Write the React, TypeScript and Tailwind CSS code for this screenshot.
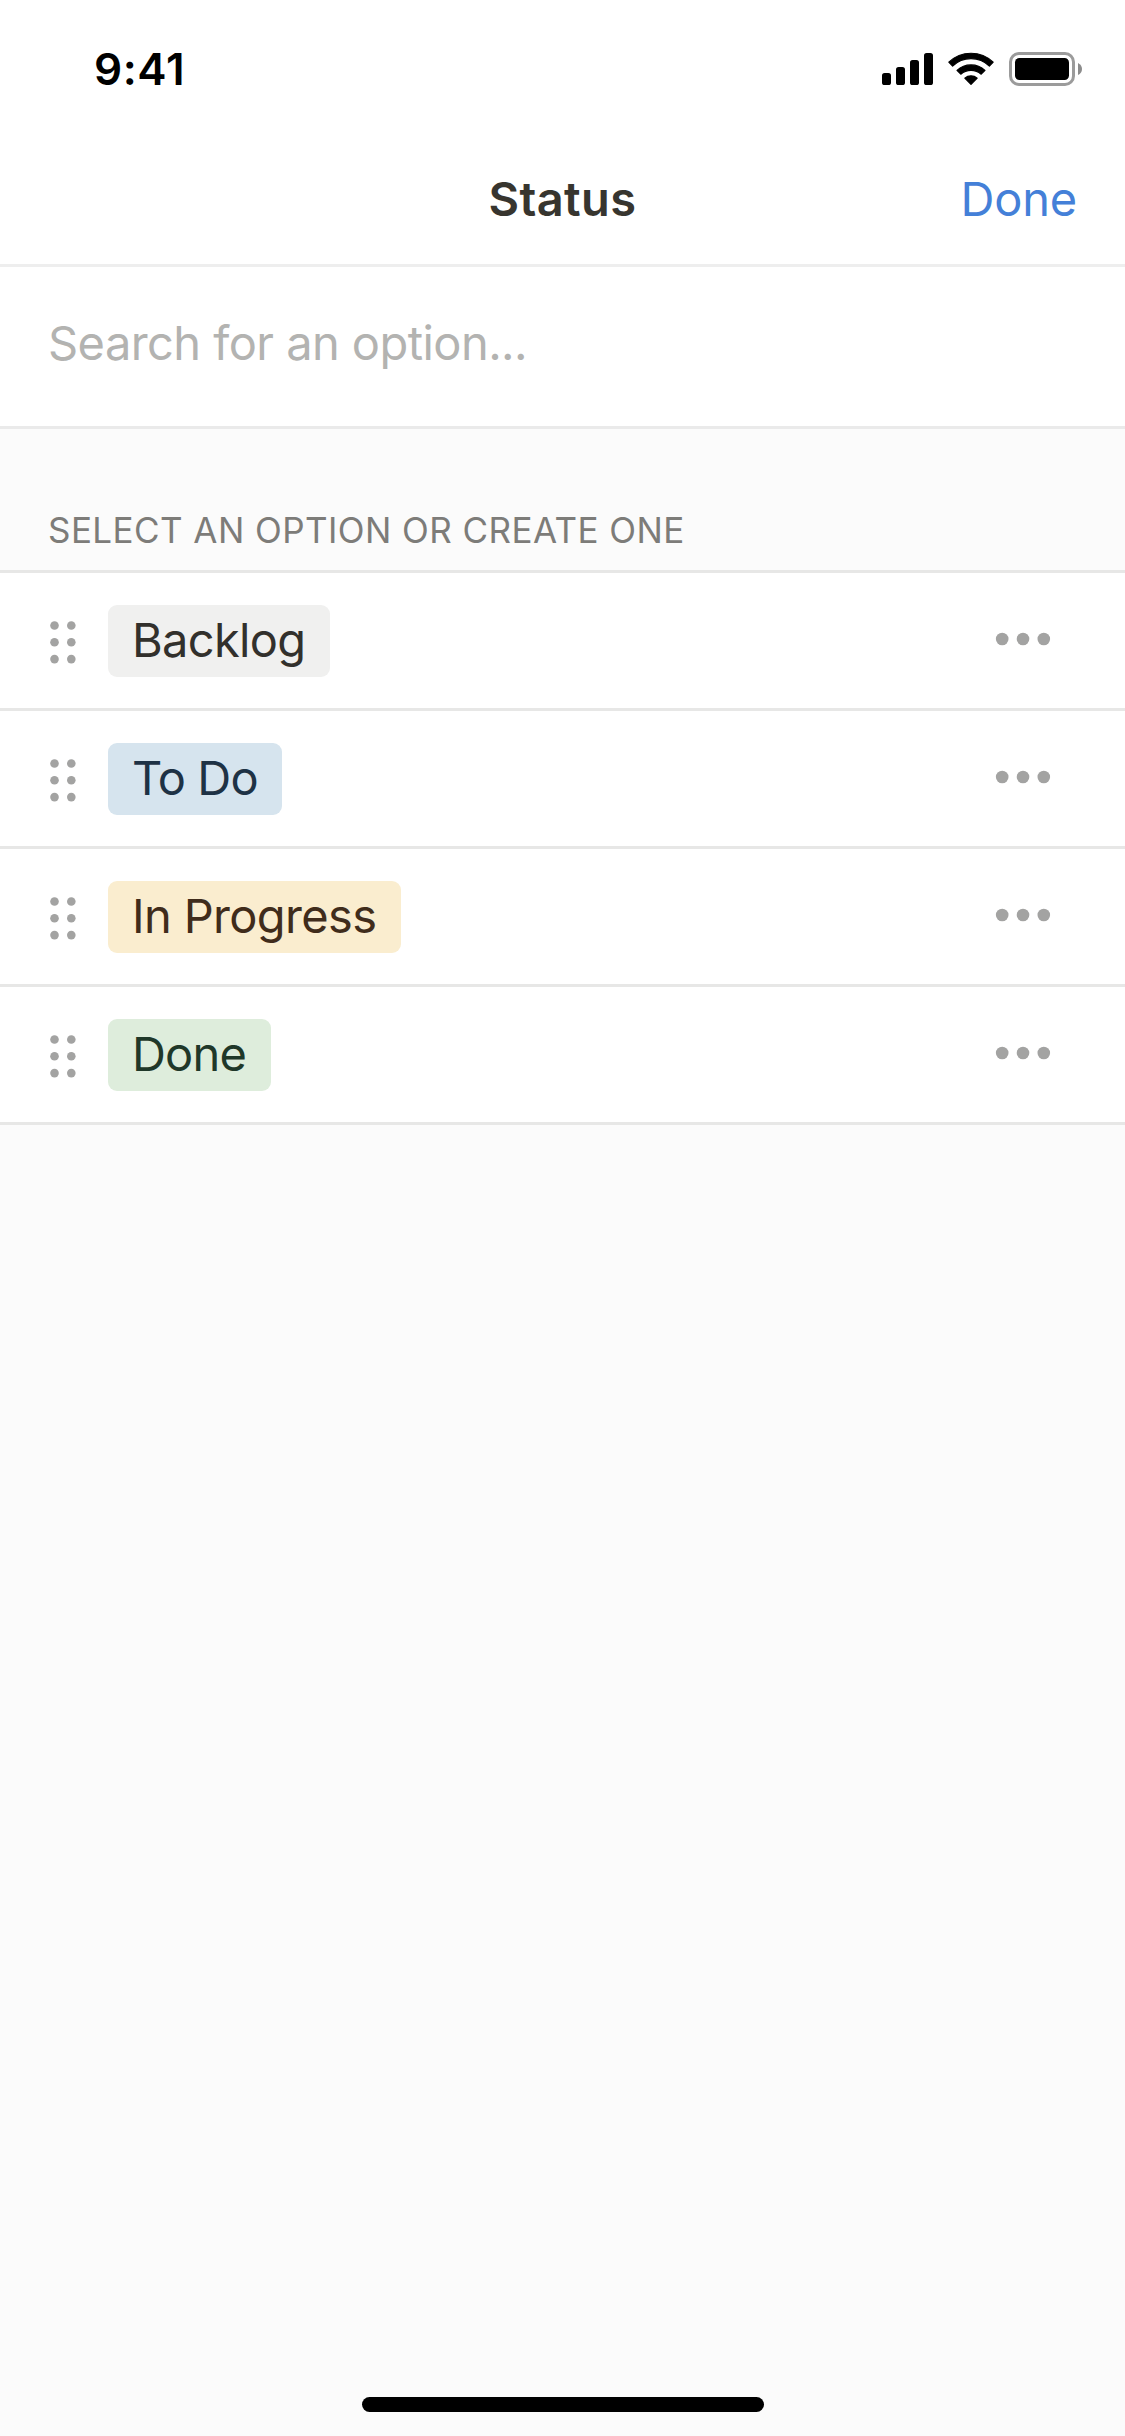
import React from 'react';

interface StatusOption {
    name: string;
    tagClass: string;
    textClass: string;
}

const OPTIONS: StatusOption[] = [
    { name: 'Backlog', tagClass: 'w-[222px] bg-[#f0f0ef] text-[#32302c]', textClass: 'tracking-[-0.7px]' },
    { name: 'To Do', tagClass: 'w-[174px] bg-[#d6e4ee] text-[#1e3245]', textClass: 'tracking-[-0.9px]' },
    { name: 'In Progress', tagClass: 'w-[293px] bg-[#faedcf] text-[#402c1b]', textClass: 'tracking-[-0.65px]' },
    { name: 'Done', tagClass: 'w-[163px] bg-[#deeddc] text-[#1f3829]', textClass: 'tracking-[-0.8px]' },
];

const StatusBar: React.FC = () => (
    <div className="flex h-[132px] items-start justify-between pt-[52px] pl-[94px] pr-[43px]">
        <span className="text-[44px] leading-[34px] font-semibold tracking-[0.6px] text-black">9:41</span>
        <div className="flex">
            <svg width="200" height="34" viewBox="0 0 200 34">
                {/* signal */}
                <rect x="0" y="21" width="9" height="12" rx="2.6" />
                <rect x="14" y="15" width="9" height="18" rx="2.6" />
                <rect x="28" y="8" width="9" height="25" rx="2.6" />
                <rect x="42" y="1" width="9" height="32" rx="2.6" />
                {/* wifi */}
                <g strokeWidth="1.2" strokeLinejoin="round" stroke="black">
                    <path d="M66.8 10.2A32 32 0 0 1 111.2 10.2L107.4 14A26.6 26.6 0 0 0 70.6 14Z" />
                    <path d="M75 18.4A20.6 20.6 0 0 1 103 18.4L99.2 22.2A15.4 15.4 0 0 0 78.8 22.2Z" />
                    <path d="M82.8 26.2A9.4 9.4 0 0 1 95.2 26.2L89 32.4Z" />
                </g>
                {/* battery */}
                <rect x="128.5" y="1.5" width="63" height="31" rx="8.5" fill="none" stroke="#9b9b9b" strokeWidth="3" />
                <rect x="133" y="6" width="54" height="22" rx="4.5" />
                <path d="M196 11Q200 13 200 17Q200 21 196 23Z" fill="#8c8c8c" />
            </svg>
        </div>
    </div>
);

const DragHandle: React.FC = () => (
    <svg width="26" height="43" viewBox="0 0 26 43" fill="#a3a3a2" className="shrink-0">
        {[4.5, 21.3, 38.1].map((y) => (
            <React.Fragment key={y}>
                <circle cx="4.5" cy={y} r="4.3" />
                <circle cx="21.3" cy={y} r="4.3" />
            </React.Fragment>
        ))}
    </svg>
);

const MoreIcon: React.FC = () => (
    <svg width="56" height="14" viewBox="0 0 56 14" fill="#a3a3a2">
        <circle cx="7.2" cy="7" r="6.3" />
        <circle cx="28" cy="7" r="6.3" />
        <circle cx="48.8" cy="7" r="6.3" />
    </svg>
);

const OptionRow: React.FC<{ option: StatusOption }> = ({ option }) => (
    <li className="flex h-[138px] items-center border-b-3 border-[#e7e7e6] bg-white pl-[50px] pr-[74px]">
        <div className="pt-[3px]">
            <DragHandle />
        </div>
        <div className={`ml-8 flex h-[72px] items-start rounded-[9px] pl-6 text-[47px] leading-[70px] whitespace-nowrap ${option.tagClass}`}>
            <span className={option.textClass}>{option.name}</span>
        </div>
        <button className="ml-auto pb-[3px]">
            <MoreIcon />
        </button>
    </li>
);

export default function App() {
    return (
        <div className="flex h-[2436px] w-[1125px] flex-col bg-[#fbfbfb] font-['Inter',sans-serif]">
            <div className="bg-white">
                <StatusBar />
                <header className="grid h-[135px] grid-cols-3 items-center border-b-3 border-[#eeeeee] px-12 pt-[2px] text-[47px]">
                    <span />
                    <h1 className="text-center font-semibold tracking-[0.4px] text-[#37352f]">Status</h1>
                    <button className="text-right tracking-[-0.2px] text-[#4480d8]">Done</button>
                </header>
                <div className="flex h-[162px] items-start border-b-3 border-[#eaeaea] px-12 pt-[41px]">
                    <span className="text-[47px] leading-[70px] tracking-[-0.56px] text-[#b3b3b1]">Search for an option...</span>
                </div>
            </div>

            <div className="flex h-36 items-end border-b-3 border-[#e7e7e6] px-12 pb-[18px]">
                <h2 className="text-[35px] leading-[44px] tracking-[0.43px] whitespace-nowrap text-[#7d7c79]">SELECT AN OPTION OR CREATE ONE</h2>
            </div>

            <ul>
                {OPTIONS.map((option) => (
                    <OptionRow key={option.name} option={option} />
                ))}
            </ul>

            <div className="mt-auto mb-6 ml-[362px] h-[15px] w-[402px] rounded-full bg-black" />
        </div>
    );
}
